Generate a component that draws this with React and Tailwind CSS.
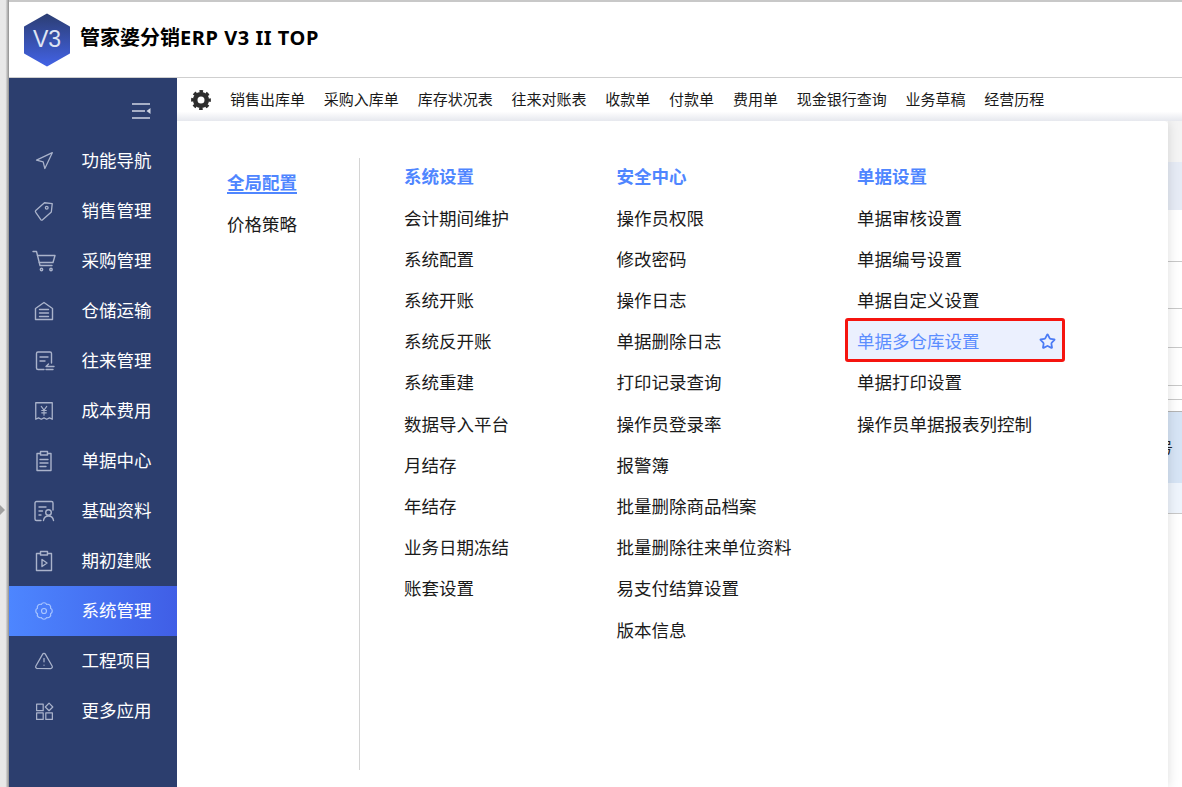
import React from "react";
import { Navigation, TriangleAlert, Star } from "lucide-react";

const S = ({ children, w = 24 }) => (
  <svg width={w} height={w} viewBox="0 0 24 24" fill="none" stroke="currentColor" strokeWidth="1.4" strokeLinejoin="round" strokeLinecap="round">
    {children}
  </svg>
);

const icons = {
  nav: <Navigation size={20} strokeWidth={1.5} />,
  tag: (
    <S w={22}>
      <path d="M3 11.500 12.500 3l8.500 1-1 9-9.500 8.500a1.500 1.500 0 0 1-2 0L3 13.500a1.500 1.500 0 0 1 0-2z" />
      <circle cx="15" cy="8.500" r="1.500" />
    </S>
  ),
  cart: (
    <S>
      <path d="M1 2.500h3.500l3.500 14h12" />
      <path d="M5.500 6.500H23l-2 7H7.300" />
      <circle cx="9.500" cy="20.500" r="1.200" />
      <circle cx="19" cy="20.500" r="1.200" />
    </S>
  ),
  store: (
    <S>
      <path d="M3.500 9.500 12 3.500l8.500 6v11h-17z" />
      <path d="M7.500 10.500h9M7.500 14h9M7.500 17.500h9" />
    </S>
  ),
  deal: (
    <S>
      <path d="M12 20.500H6a1.500 1.500 0 0 1-1.500-1.500V4.500A1.500 1.500 0 0 1 6 3h12a1.500 1.500 0 0 1 1.500 1.500V14" />
      <path d="M8 8h8M8 12h5" />
      <path d="M22 17.500h-8l2.500-2.500M14 20.500h7" />
    </S>
  ),
  cost: (
    <S w={22}>
      <path d="M3 3h18v18l-3-1.500-3 1.500-3-1.500-3 1.500-3-1.500-3 1.500z" />
      <path d="m9 7 3 4 3-4M12 11v5.500M9.500 11.500h5M9.500 14h5" strokeWidth="1.200" />
    </S>
  ),
  doc: (
    <S>
      <path d="M8.500 4.500H5v17h14v-17h-3.500" />
      <rect x="8.500" y="2.500" width="7" height="3.500" />
      <path d="M8 10.500h8M8 14h8M8 17.500h6" />
    </S>
  ),
  base: (
    <S>
      <path d="M9 21.500H4.500A1.500 1.500 0 0 1 3 20V4a1.500 1.500 0 0 1 1.500-1.500h15A1.500 1.500 0 0 1 21 4v7" />
      <path d="M7 8h7M7 12h3.500M7 16h2" />
      <circle cx="16.500" cy="13.500" r="2.800" />
      <path d="M11.500 21.500c.5-3 2.500-4.500 5-4.500s4.500 1.500 5 4.500" />
    </S>
  ),
  init: (
    <S>
      <path d="M8.500 4.500H4.500v17h15v-17h-4" />
      <rect x="8.500" y="2.500" width="7" height="3.500" />
      <path d="m10 10.500 5 3.500-5 3.500z" />
    </S>
  ),
  sys: (
    <S w={20}>
      <path d="M19.850 8.750A3.600 3.600 0 0 1 19.850 15.250A3.600 3.600 0 0 1 15.250 19.850A3.600 3.600 0 0 1 8.750 19.850A3.600 3.600 0 0 1 4.150 15.250A3.600 3.600 0 0 1 4.150 8.750A3.600 3.600 0 0 1 8.750 4.150A3.600 3.600 0 0 1 15.250 4.150A3.600 3.600 0 0 1 19.850 8.750Z" />
      <circle cx="12" cy="12" r="3" />
    </S>
  ),
  warn: <TriangleAlert size={20} strokeWidth={1.5} />,
  more: (
    <S w={21}>
      <rect x="3" y="3.500" width="7.500" height="7.500" />
      <rect x="3" y="13.500" width="7.500" height="7.500" />
      <rect x="13.500" y="13.500" width="7.500" height="7.500" />
      <path d="m17.200 2.500 4.300 4.300-4.300 4.300-4.300-4.300z" />
    </S>
  ),
};

const nav = [
  ["功能导航", "nav"],
  ["销售管理", "tag"],
  ["采购管理", "cart"],
  ["仓储运输", "store"],
  ["往来管理", "deal"],
  ["成本费用", "cost"],
  ["单据中心", "doc"],
  ["基础资料", "base"],
  ["期初建账", "init"],
  ["系统管理", "sys", true],
  ["工程项目", "warn"],
  ["更多应用", "more"],
];

const shortcuts = ["销售出库单", "采购入库单", "库存状况表", "往来对账表", "收款单", "付款单", "费用单", "现金银行查询", "业务草稿", "经营历程"];

const col1 = ["会计期间维护", "系统配置", "系统开账", "系统反开账", "系统重建", "数据导入平台", "月结存", "年结存", "业务日期冻结", "账套设置"];
const col2 = ["操作员权限", "修改密码", "操作日志", "单据删除日志", "打印记录查询", "操作员登录率", "报警簿", "批量删除商品档案", "批量删除往来单位资料", "易支付结算设置", "版本信息"];
const col3a = ["单据审核设置", "单据编号设置", "单据自定义设置"];
const col3b = ["单据打印设置", "操作员单据报表列控制"];

const Row = ({ children }) => <div className="h-[41.2px] flex items-center whitespace-nowrap text-[17.5px] text-[#1a1a1a]">{children}</div>;
const Head = ({ children }) => <div className="h-[41.2px] flex items-center whitespace-nowrap text-[17.5px] font-bold text-[#4f86ff]">{children}</div>;

const StripRow = ({ className, children }) => <div className={`w-full shrink-0 ${className}`}>{children}</div>;

export default function App() {
  return (
    <div className="w-[1182px] h-[787px] overflow-hidden flex bg-white font-['Noto_Sans_CJK_SC','Noto_Sans',sans-serif]">
      <div className="w-[9px] shrink-0 h-full bg-gradient-to-r from-[#e8e8e8] from-60% to-[#8f8f8f] flex items-center">
        <div className="mt-[232px] w-0 h-0 border-y-[5px] border-y-transparent border-l-[5px] border-l-[#a0a0a0]" />
      </div>
      <div className="flex-1 min-w-0 flex flex-col">
        <div className="h-[2px] shrink-0 bg-[#c8c8c8]" />
        <header className="h-[76px] shrink-0 bg-white border-b border-[#cfcfcf] flex items-center pl-[14px]">
          <div className="relative w-[48px] h-[54px] flex items-center justify-center">
            <svg className="absolute inset-0" width="48" height="54" viewBox="0 0 48 54">
              <defs>
                <linearGradient id="hex" x1="0" y1="0" x2="0" y2="1">
                  <stop offset="0" stopColor="#2c3e74" />
                  <stop offset="1" stopColor="#4262e4" />
                </linearGradient>
              </defs>
              <path d="M24 1.500 46 14v26L24 52.500 2 40V14z" fill="url(#hex)" stroke="url(#hex)" strokeWidth="2" strokeLinejoin="round" />
            </svg>
            <span className="relative text-[23px] text-[#dfe4f3] font-['Liberation_Sans',sans-serif]">V3</span>
          </div>
          <div className="ml-[9px] -mt-[3px] text-[20px] font-bold text-black whitespace-nowrap font-['Noto_Sans','Noto_Sans_CJK_SC',sans-serif]">
            管家婆分销<span className="tracking-[0.55px]">ERP V3 II TOP</span>
          </div>
        </header>
        <div className="flex-1 min-h-0 flex">
          <aside className="w-[168px] shrink-0 bg-[#2c3e6e] relative z-20 pt-[24px]">
            <div className="h-[20px] flex justify-end pr-[26px] mb-[14px]">
              <svg width="20" height="18" viewBox="0 0 20 18" fill="none" stroke="#cfd5e3" strokeWidth="1.500">
                <path d="M1 2h18M1 9h13M1 16h18" />
                <path d="M19.500 6v6l-4-3z" fill="#cfd5e3" stroke="none" />
              </svg>
            </div>
            {nav.map(([label, ic, active]) => (
              <div key={label} className={`h-[50px] flex items-center text-[17.500px] text-white ${active ? "bg-gradient-to-r from-[#4d86ff] to-[#405ee6]" : ""}`}>
                <div className={`w-[24px] ml-[23px] mr-[25.500px] flex justify-center ${active ? "text-[#a9c6ff]" : "text-[#aab3cb]"}`}>{icons[ic]}</div>
                <span className="pb-[2px]">{label}</span>
              </div>
            ))}
          </aside>
          <div className="flex-1 min-w-0 flex flex-col">
            <div className="h-[43px] shrink-0 bg-gradient-to-b from-white from-78% to-[#e6e8ee] relative z-10 flex items-start pl-[14px] pt-[8px]">
              <svg width="20" height="20" viewBox="0 0 20 20" fill="none" stroke="#2e2e2e" className="shrink-0 mt-[4px]">
                <circle cx="10" cy="10" r="5.800" strokeWidth="4.600" />
                <circle cx="10" cy="10" r="8.600" strokeWidth="2.600" strokeDasharray="3.600 3.150" strokeDashoffset="1.800" />
              </svg>
              <div className="ml-[19px] flex gap-[18.800px] text-[15px] text-[#1a1a1a] whitespace-nowrap leading-[26px]">
                {shortcuts.map((s) => (
                  <span key={s}>{s}</span>
                ))}
              </div>
            </div>
            <div className="flex-1 min-h-0 flex">
              <div className="w-[991px] shrink-0 bg-white rounded-tr-[4px] relative z-[5] shadow-[0_0_12px_rgba(0,0,0,0.14)] flex items-start">
                <div className="w-[182px] shrink-0 pl-[50px] pt-[50px] text-[17.500px] whitespace-nowrap">
                  <div className="h-[23px] w-fit font-bold text-[#4f86ff] border-b-2 border-[#4f86ff] leading-[21px]">全局配置</div>
                  <div className="mt-[17px] text-[#1a1a1a] leading-[26px]">价格策略</div>
                </div>
                <div className="w-px h-[612px] mt-[37px] bg-[#d4d4d4] shrink-0" />
                <div className="flex pt-[35px]">
                  <div className="ml-[44px] w-[212.500px]">
                    <Head>系统设置</Head>
                    {col1.map((t) => <Row key={t}>{t}</Row>)}
                  </div>
                  <div className="w-[240.500px]">
                    <Head>安全中心</Head>
                    {col2.map((t) => <Row key={t}>{t}</Row>)}
                  </div>
                  <div className="w-[208px]">
                    <Head>单据设置</Head>
                    {col3a.map((t) => <Row key={t}>{t}</Row>)}
                    <div className="-ml-[12px] -mt-[2.400px] -mb-[0.400px] w-[220px] h-[44px] border-[3px] border-[#f5140f] rounded-[3px] bg-[#ebf0fe] flex items-center justify-between pl-[9px] pr-[6px] pt-[2px] text-[17.500px] text-[#5b8dff] whitespace-nowrap">
                      单据多仓库设置
                      <Star size={17} strokeWidth={2.500} className="text-[#4b7bf5]" />
                    </div>
                    {col3b.map((t) => <Row key={t}>{t}</Row>)}
                  </div>
                </div>
              </div>
              <div className="flex-1 min-w-0 flex flex-col overflow-hidden text-[15px] text-[#222]">
                <StripRow className="h-[41px] bg-[#f4f4f4]" />
                <StripRow className="h-[48px] bg-[#e6ebf5]" />
                <StripRow className="h-[52px] bg-white border-b border-[#c8c8c8]" />
                <StripRow className="h-[47px] bg-white border-b border-[#c8c8c8]" />
                <StripRow className="h-[39px] bg-white border-b border-[#c8c8c8]" />
                <StripRow className="h-[38px] bg-white border-b border-[#c8c8c8]" />
                <StripRow className="h-[14px] bg-white border-b border-[#c8c8c8]" />
                <StripRow className="h-[12px] bg-white border-b border-[#b4b4b4]" />
                <StripRow className="h-[71px] bg-[#d6e4f5] flex items-center whitespace-nowrap">
                  <span className="-ml-[10px]">号</span>
                </StripRow>
                <StripRow className="h-[31px] bg-[#eef4fc] border-b border-[#c8c8c8]" />
                <div className="flex-1 bg-white" />
              </div>
            </div>
          </div>
        </div>
      </div>
    </div>
  );
}
